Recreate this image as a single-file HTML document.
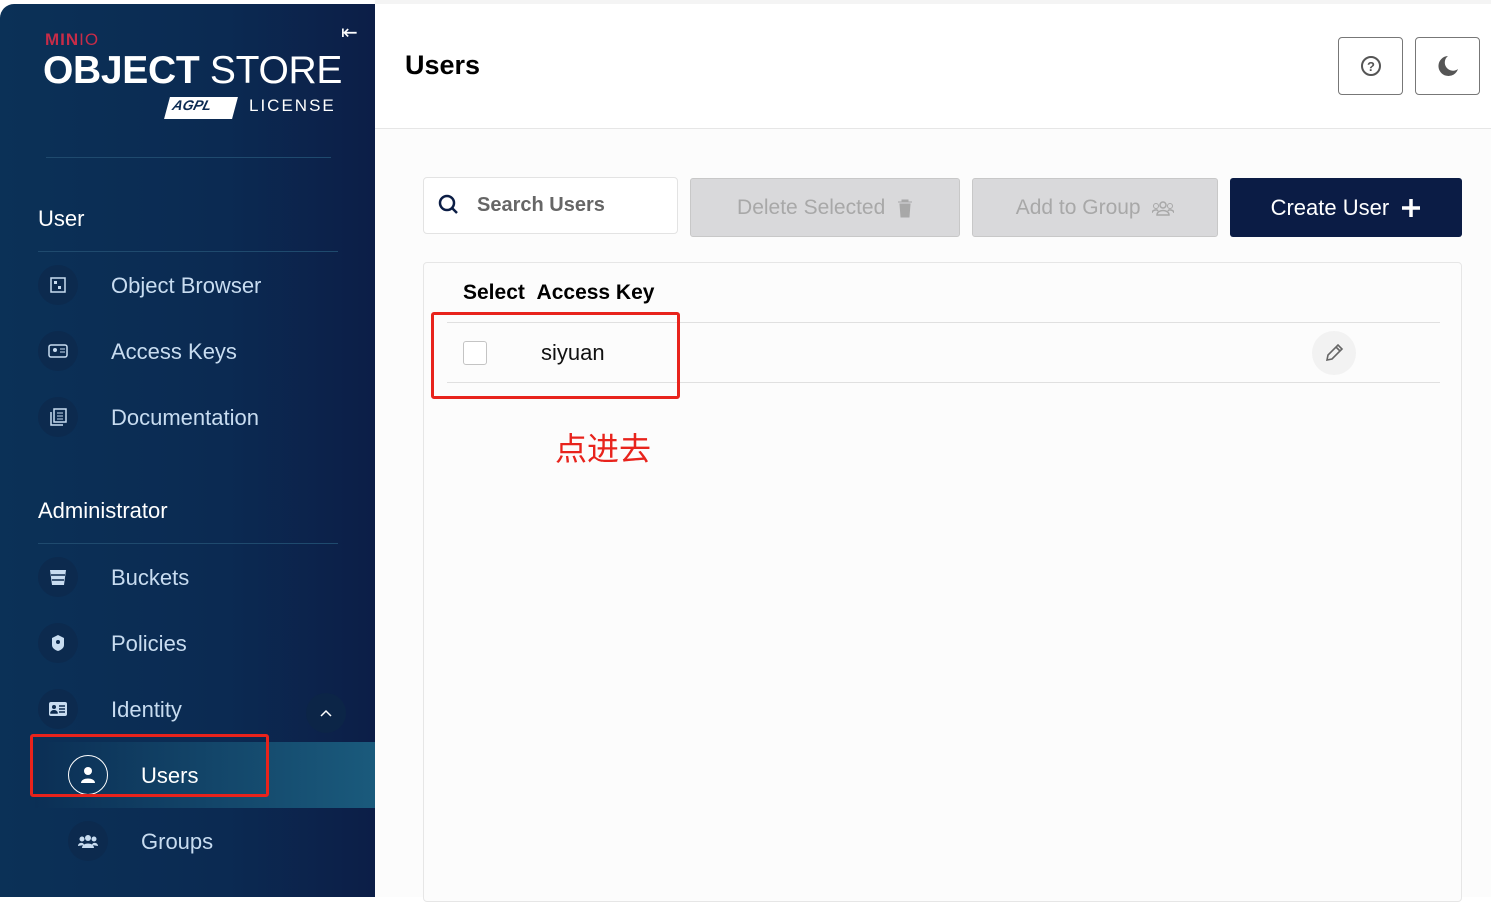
<!DOCTYPE html>
<html><head><meta charset="utf-8"><style>
*{margin:0;padding:0;box-sizing:border-box}
body{width:1491px;height:897px;overflow:hidden;background:#fff;font-family:"Liberation Sans",sans-serif;position:relative}
.side{position:absolute;left:0;top:4px;width:375px;height:893px;background:linear-gradient(to right,#0b3157,#0b2a52 60%,#0c1e47);border-top-left-radius:14px;color:#c8dcf0}
.a{position:absolute}
.ic{position:absolute;width:40px;height:40px;border-radius:50%;background:#0c2a4e;display:flex;align-items:center;justify-content:center}
.nt{position:absolute;font-size:22px;color:#c8dcf0}
.hr{position:absolute;height:1px;background:#1f4a6e}
.main{position:absolute;left:375px;top:0;right:0;bottom:0}
.btn{position:absolute;border-radius:3px;display:flex;align-items:center;justify-content:center;font-size:21px}
</style></head><body>
<div class="side">
 <div class="a" style="left:45px;top:26px;font-size:17px;font-weight:bold;color:#c72c48;letter-spacing:1px">MIN<span style="font-weight:normal">IO</span></div>
 <div class="a" style="left:43px;top:45px;font-size:39px;color:#fff;letter-spacing:-0.3px"><b>OBJECT</b> STORE</div>
 <div class="a" style="left:167px;top:93px;width:68px;height:22px;background:#fff;transform:skewX(-15deg);color:#0b2a52;font-size:14px;font-style:italic;font-weight:bold;padding-left:5px">AGPL</div>
 <div class="a" style="left:249px;top:92px;font-size:17px;color:#fff;letter-spacing:2px">LICENSE</div>
 <div class="a" style="left:341px;top:16px;font-size:20px;color:#fff">⇤</div>
 <div class="hr" style="left:46px;top:153px;width:285px"></div>
 <div class="a" style="left:38px;top:202px;font-size:22px;color:#fff">User</div>
 <div class="hr" style="left:38px;top:247px;width:300px"></div>
 <div class="ic" style="left:38px;top:261px"><svg width="16" height="16"><rect x="1" y="1" width="14" height="14" fill="none" stroke="#c8dcf0" stroke-width="1.5"/><rect x="4" y="4" width="3" height="3" fill="#c8dcf0"/><rect x="8" y="9" width="3" height="3" fill="#c8dcf0"/></svg></div>
 <div class="nt" style="left:111px;top:269px">Object Browser</div>
 <div class="ic" style="left:38px;top:327px"><svg width="20" height="16"><rect x="1" y="2" width="18" height="12" rx="2" fill="none" stroke="#c8dcf0" stroke-width="1.5"/><circle cx="7" cy="7" r="2" fill="#c8dcf0"/><path d="M12 6h5M12 9h5" stroke="#c8dcf0"/></svg></div>
 <div class="nt" style="left:111px;top:335px">Access Keys</div>
 <div class="ic" style="left:38px;top:393px"><svg width="18" height="18"><rect x="5" y="1" width="12" height="13" fill="none" stroke="#c8dcf0" stroke-width="1.5"/><path d="M2 4v13h12" fill="none" stroke="#c8dcf0" stroke-width="1.5"/><path d="M8 5h6M8 8h6M8 11h6" stroke="#c8dcf0"/></svg></div>
 <div class="nt" style="left:111px;top:401px">Documentation</div>
 <div class="a" style="left:38px;top:494px;font-size:22px;color:#fff">Administrator</div>
 <div class="hr" style="left:38px;top:539px;width:300px"></div>
 <div class="ic" style="left:38px;top:553px"><svg width="18" height="18"><path d="M1 2h16l-2 15H3z" fill="#c8dcf0"/><path d="M2 7h14M3 12h12" stroke="#0c2a4e" stroke-width="1.5"/></svg></div>
 <div class="nt" style="left:111px;top:561px">Buckets</div>
 <div class="ic" style="left:38px;top:619px"><svg width="14" height="18"><path d="M7 1 L13 4v7c0 3-3 5-6 6-3-1-6-3-6-6V4z" fill="#c8dcf0"/><circle cx="7" cy="8" r="2" fill="#0c2a4e"/></svg></div>
 <div class="nt" style="left:111px;top:627px">Policies</div>
 <div class="ic" style="left:38px;top:685px"><svg width="18" height="14"><rect x="0" y="0" width="18" height="14" rx="2" fill="#c8dcf0"/><circle cx="5" cy="5" r="2" fill="#0c2a4e"/><path d="M2 11c0-3 6-3 6 0zM10 4h6M10 7h6M10 10h6" fill="#0c2a4e" stroke="#0c2a4e" stroke-width="1.5"/></svg></div>
 <div class="nt" style="left:111px;top:693px">Identity</div>
 <div class="a" style="left:306px;top:689px;width:40px;height:40px;border-radius:50%;background:#0c2547;display:flex;align-items:center;justify-content:center"><svg width="12" height="8"><path d="M1 7l5-5 5 5" fill="none" stroke="#fff" stroke-width="1.5"/></svg></div>
 <div class="a" style="left:35px;top:738px;width:340px;height:66px;background:linear-gradient(to right,#0b2f55,#1a5a7c)"></div>
 <div class="a" style="left:68px;top:751px;width:40px;height:40px;border:1.5px solid #fff;border-radius:50%;display:flex;align-items:center;justify-content:center"><svg width="16" height="18"><circle cx="8" cy="5" r="4" fill="#fff"/><path d="M1 17c0-6 14-6 14 0z" fill="#fff"/></svg></div>
 <div class="nt" style="left:141px;top:759px;color:#fff">Users</div>
 <div class="a" style="left:30px;top:730px;width:239px;height:63px;border:3px solid #e8231c;border-radius:3px"></div>
 <div class="ic" style="left:68px;top:817px"><svg width="20" height="16"><circle cx="10" cy="5" r="3" fill="#c8dcf0"/><circle cx="4" cy="6" r="2.5" fill="#c8dcf0"/><circle cx="16" cy="6" r="2.5" fill="#c8dcf0"/><path d="M4 15c0-6 12-6 12 0zM0 13c0-4 6-4 6-1zM14 12c0-3 6-3 6 1z" fill="#c8dcf0"/></svg></div>
 <div class="nt" style="left:141px;top:825px">Groups</div>
</div>
<div class="main">
 <div class="a" style="left:0;top:0;right:0;height:4px;background:#f4f4f4"></div>
 <div class="a" style="left:30px;top:50px;font-size:27px;font-weight:bold;color:#000">Users</div>
 <div class="btn" style="left:963px;top:37px;width:65px;height:58px;border:1px solid #777;border-radius:4px"><svg width="22" height="22"><circle cx="11" cy="11" r="9" fill="none" stroke="#555" stroke-width="2"/><text x="11" y="16" text-anchor="middle" font-size="13" font-weight="bold" fill="#555" font-family="Liberation Sans">?</text></svg></div>
 <div class="btn" style="left:1040px;top:37px;width:65px;height:58px;border:1px solid #777;border-radius:4px"><svg width="24" height="24"><path d="M12 2a10 10 0 1 0 10 13a8 8 0 0 1-10-13z" fill="#555"/></svg></div>
 <div class="a" style="left:0;top:128px;right:0;height:1px;background:#e6e6e6"></div>
 <div class="a" style="left:0;top:129px;right:0;bottom:0;background:#fcfcfc"></div>
 <div class="a" style="left:48px;top:177px;width:255px;height:57px;border:1px solid #e3e3e3;border-radius:4px;background:#fff"></div>
 <svg class="a" style="left:62px;top:193px" width="24" height="24"><circle cx="10" cy="10" r="7" fill="none" stroke="#0b1d45" stroke-width="2.5"/><path d="M15 15l5 5" stroke="#0b1d45" stroke-width="2.5"/></svg>
 <div class="a" style="left:102px;top:194px;font-size:20px;font-weight:bold;color:#666">Search Users</div>
 <div class="btn" style="left:315px;top:178px;width:270px;height:59px;background:#d9d9db;border:1px solid #c8c8c8;color:#a8a8a8">Delete Selected &nbsp;<svg width="16" height="20"><path d="M1 4h14M5 4V2h6v2M3 6h10l-1 13H4z" fill="#a8a8a8" stroke="#a8a8a8"/></svg></div>
 <div class="btn" style="left:597px;top:178px;width:246px;height:59px;background:#d9d9db;border:1px solid #c8c8c8;color:#a8a8a8">Add to Group &nbsp;<svg width="22" height="18"><circle cx="11" cy="6" r="3" fill="none" stroke="#a8a8a8" stroke-width="1.5"/><circle cx="4" cy="7" r="2.5" fill="none" stroke="#a8a8a8"/><circle cx="18" cy="7" r="2.5" fill="none" stroke="#a8a8a8"/><path d="M5 16c0-6 12-6 12 0zM0 14c0-3 5-4 6-2M16 12c1-2 6-1 6 2" fill="none" stroke="#a8a8a8" stroke-width="1.5"/></svg></div>
 <div class="btn" style="left:855px;top:178px;width:232px;height:59px;background:#0b1c45;color:#fff;font-size:22px">Create User &nbsp;<svg width="20" height="20"><path d="M10 1v18M1 10h18" stroke="#fff" stroke-width="3.5"/></svg></div>
 <div class="a" style="left:48px;top:262px;width:1039px;height:640px;border:1px solid #e6e6e6;border-radius:4px;background:#fcfcfc"></div>
 <div class="a" style="left:88px;top:281px;font-size:21px;font-weight:bold;color:#000">Select&nbsp;&nbsp;Access Key</div>
 <div class="a" style="left:72px;top:322px;width:993px;height:1px;background:#e0e0e0"></div>
 <div class="a" style="left:72px;top:382px;width:993px;height:1px;background:#e0e0e0"></div>
 <div class="a" style="left:88px;top:341px;width:24px;height:24px;border:1px solid #c4c4c4;border-radius:3px;background:#fff"></div>
 <div class="a" style="left:166px;top:340px;font-size:22px;color:#111">siyuan</div>
 <div class="a" style="left:937px;top:331px;width:44px;height:44px;border-radius:50%;background:#f2f2f2;display:flex;align-items:center;justify-content:center"><svg width="20" height="20"><path d="M3 17l1-5L14 2l4 4L8 16z M12 4l4 4" fill="none" stroke="#666" stroke-width="1.6"/></svg></div>
 <div class="a" style="left:56px;top:312px;width:249px;height:87px;border:3px solid #e8231c;border-radius:3px"></div>
 <div class="a" style="left:180px;top:424px;font-size:32px;color:#e8231c;font-family:'Liberation Sans','Noto Sans CJK SC',sans-serif">点进去</div>
</div>
</body></html>
